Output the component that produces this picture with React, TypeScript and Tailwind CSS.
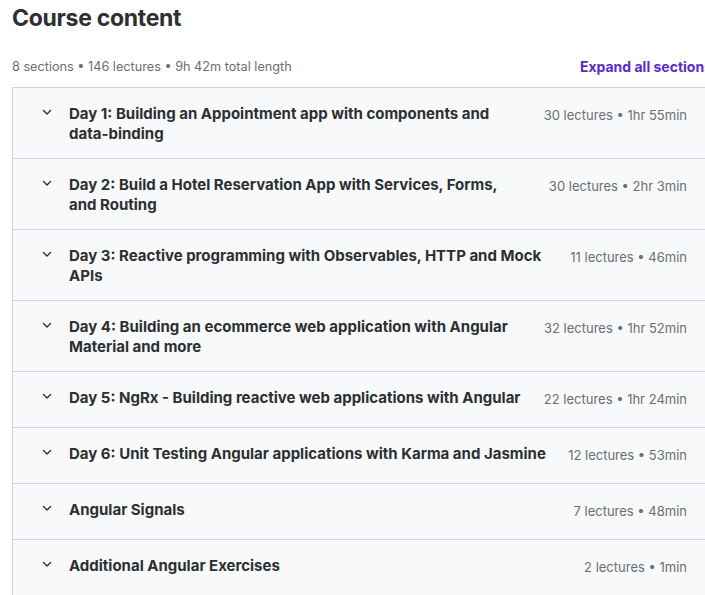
const sections = [
  { lines: ['Day 1: Building an Appointment app with components and', 'data-binding'], meta: '30 lectures • 1hr 55min' },
  { lines: ['Day 2: Build a Hotel Reservation App with Services, Forms,', 'and Routing'], meta: '30 lectures • 2hr 3min' },
  { lines: ['Day 3: Reactive programming with Observables, HTTP and Mock', 'APIs'], meta: '11 lectures • 46min' },
  { lines: ['Day 4: Building an ecommerce web application with Angular', 'Material and more'], meta: '32 lectures • 1hr 52min' },
  { lines: ['Day 5: NgRx - Building reactive web applications with Angular'], meta: '22 lectures • 1hr 24min' },
  { lines: ['Day 6: Unit Testing Angular applications with Karma and Jasmine'], meta: '12 lectures • 53min' },
  { lines: ['Angular Signals'], meta: '7 lectures • 48min' },
  { lines: ['Additional Angular Exercises'], meta: '2 lectures • 1min' },
];

function Chevron() {
  return (
    <svg width="10" height="20" viewBox="0 0 10 20" className="mr-[17px] shrink-0 text-[#2d2f31]">
      <path d="M1.5 6.5 L5 10 L8.5 6.5" fill="none" stroke="currentColor" strokeWidth="1.4" strokeLinecap="round" strokeLinejoin="round" />
    </svg>
  );
}

function SectionRow({ lines, meta }: { lines: string[]; meta: string }) {
  return (
    <div
      className={
        'flex items-start border-b border-[#d1d7dc] bg-[#f7f9fa] pl-[29px] pr-[25px] pt-[16px] ' +
        (lines.length > 1 ? 'pb-[14px]' : 'pb-[15px]')
      }
    >
      <Chevron />
      <div className="mr-4 min-h-6 flex-1 text-[15px] font-bold leading-5 text-[#2d2f31]">
        {lines.map((l) => (
          <div key={l} className="whitespace-nowrap">
            {l}
          </div>
        ))}
      </div>
      <div className="shrink-0 pt-[1px] text-[13px] leading-5 text-[#6a6f73]">{meta}</div>
    </div>
  );
}

export default function App() {
  return (
    <div className="h-[595px] w-[705px] overflow-hidden bg-white font-['Inter',sans-serif]">
      <div className="w-[712px] pl-3">
        <h2 className="pt-[2px] text-[23px] font-bold leading-8 tracking-[-0.3px] text-[#2d2f31]">
          Course content
        </h2>
        <div className="mt-[21px] flex h-[24px] items-center justify-between">
          <span className="text-[12.7px] text-[#6a6f73]">
            8 sections • 146 lectures • 9h 42m total length
          </span>
          <button className="whitespace-nowrap pl-2 text-sm font-bold text-[#5b2bc9]">
            Expand all sections
          </button>
        </div>
        <div className="mt-[8px] border-l border-t border-[#d1d7dc]">
          {sections.map((s) => (
            <SectionRow key={s.meta + s.lines[0]} lines={s.lines} meta={s.meta} />
          ))}
        </div>
      </div>
    </div>
  );
}
